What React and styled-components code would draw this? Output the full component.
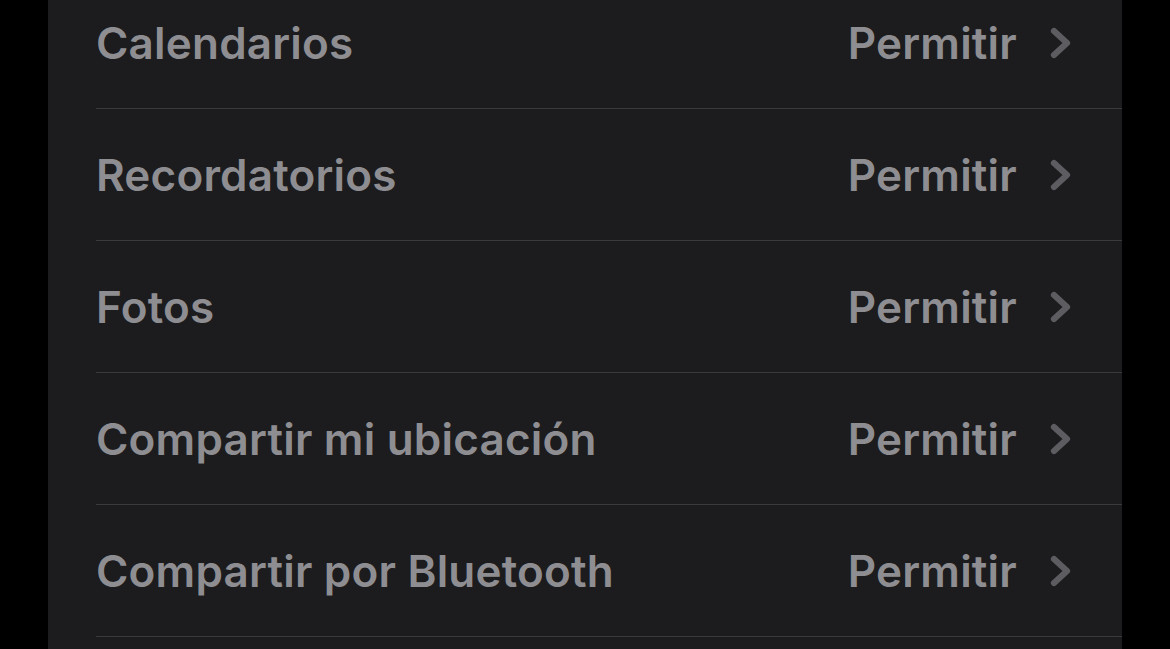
import React from "react";
import styled, { createGlobalStyle } from "styled-components";

const GlobalStyle = createGlobalStyle`
    html, body {
        margin: 0;
        padding: 0;
        background: #000;
    }
    body {
        font-family: Inter, "Noto Sans", "Liberation Sans", sans-serif;
    }
`;

const Screen = styled.div`
    height: 649px;
    overflow: hidden;
    padding: 0 48px;
`;

const Panel = styled.div`
    display: flow-root;
    background: #1c1c1e;
    height: 100%;
`;

const List = styled.ul`
    list-style: none;
    margin: -23px 0 0;
    padding: 0 0 0 48px;
`;

const Row = styled.li`
    height: 131px;
    display: flex;
    align-items: center;
    justify-content: space-between;
    padding-right: 51px;
    border-bottom: 1px solid #3a3a3c;
`;

const Label = styled.span`
    font-size: 44px;
    font-weight: 600;
    letter-spacing: 0.2px;
    color: #8e8e92;
`;

const Value = styled.span`
    display: flex;
    align-items: center;
    gap: 33px;
    font-size: 44px;
    font-weight: 600;
    letter-spacing: 0.2px;
    color: #8e8e92;
`;

const Chevron = () => (
    <svg width="21" height="32" viewBox="0 0 21 32" fill="none">
        <path
            d="M4 4 L17 16 L4 28"
            stroke="#5c5c61"
            strokeWidth="6.2"
            strokeLinecap="round"
            strokeLinejoin="round"
        />
    </svg>
);

const items = [
    "Calendarios",
    "Recordatorios",
    "Fotos",
    "Compartir mi ubicación",
    "Compartir por Bluetooth"
];

const App = () => {
    return (
        <>
            <GlobalStyle />
            <Screen>
                <Panel>
                    <List>
                        {items.map(item => (
                            <Row key={item}>
                                <Label>{item}</Label>
                                <Value>
                                    Permitir
                                    <Chevron />
                                </Value>
                            </Row>
                        ))}
                    </List>
                </Panel>
            </Screen>
        </>
    );
};

export default App;
